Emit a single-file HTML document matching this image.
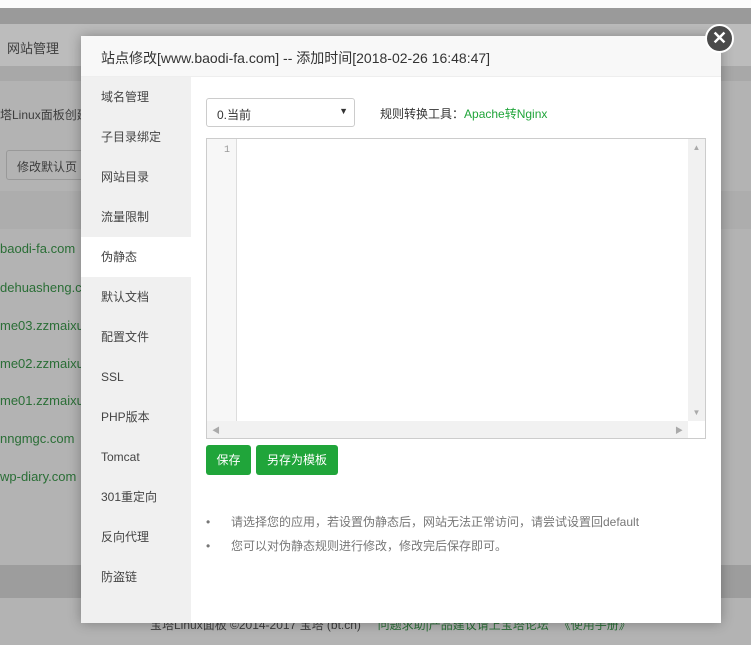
<!DOCTYPE html>
<html><head><meta charset="utf-8"><style>
*{margin:0;padding:0;box-sizing:border-box}
body{width:751px;height:645px;overflow:hidden;position:relative;background:#b3b3b3;font-family:"Liberation Sans","Noto Sans CJK SC",sans-serif;font-size:12px;color:#333}
.a{position:absolute}
.bgtext{color:#3d3d3d;font-size:13px}
.g{color:#2a6e36;font-size:13px}
.dlg{left:81px;top:36px;width:640px;height:587px;background:#fff;box-shadow:0 0 12px rgba(0,0,0,.3)}
.title{left:0;top:0;width:640px;height:41px;background:#f8f8f8;border-bottom:1px solid #eee;font-size:14px;color:#333;padding:12px 0 0 20px}
.side{left:0;top:41px;width:110px;height:546px;background:#f0f0f0}
.side div{height:40px;line-height:40px;padding-left:20px;font-size:12px;color:#444}
.side .on{background:#fff}
</style></head><body>
<div class="a" style="left:0;top:0;width:751px;height:8px;background:#fbfbfb"></div>
<div class="a" style="left:0;top:8px;width:751px;height:16px;background:#9a9a9a"></div>
<div class="a" style="left:0;top:24px;width:751px;height:42px;background:#bcbcbc"></div>
<div class="a bgtext" style="left:7px;top:38px">网站管理</div>
<div class="a" style="left:0;top:66px;width:751px;height:15px;background:#a8a8a8"></div>
<div class="a bgtext" style="left:0;top:106px;font-size:12px">塔Linux面板创建</div>
<div class="a" style="left:6px;top:150px;width:80px;height:30px;border:1px solid #999;border-radius:3px"></div>
<div class="a bgtext" style="left:17px;top:158px;font-size:12px">修改默认页</div>
<div class="a" style="left:0;top:191px;width:751px;height:38px;background:#adadad"></div>
<div class="a g" style="left:0;top:241px">baodi-fa.com</div>
<div class="a g" style="left:0;top:280px">dehuasheng.com</div>
<div class="a g" style="left:0;top:318px">me03.zzmaixu</div>
<div class="a g" style="left:0;top:356px">me02.zzmaixu</div>
<div class="a g" style="left:0;top:393px">me01.zzmaixu</div>
<div class="a g" style="left:0;top:431px">nngmgc.com</div>
<div class="a g" style="left:0;top:469px">wp-diary.com</div>
<div class="a" style="left:0;top:565px;width:751px;height:33px;background:#9d9d9d"></div>
<div class="a bgtext" style="left:150px;top:616px;font-size:12px">宝塔Linux面板 ©2014-2017 宝塔 (bt.cn) &nbsp;&nbsp;&nbsp; <span class="g" style="font-size:12px">问题求助|产品建议请上宝塔论坛 &nbsp;&nbsp;《使用手册》</span></div>

<div class="a dlg">
<div class="a title">站点修改[www.baodi-fa.com] -- 添加时间[2018-02-26 16:48:47]</div>
<div class="a side">
<div>域名管理</div><div>子目录绑定</div><div>网站目录</div><div>流量限制</div><div class="on">伪静态</div><div>默认文档</div><div>配置文件</div><div>SSL</div><div>PHP版本</div><div>Tomcat</div><div>301重定向</div><div>反向代理</div><div>防盗链</div>
</div>
<div class="a" style="left:125px;top:62px;width:149px;height:29px;border:1px solid #ccc;border-radius:3px;padding:7px 0 0 10px">0.当前<span style="position:absolute;right:6px;top:7px;font-size:9px">▼</span></div>
<div class="a" style="left:299px;top:69px">规则转换工具：<span style="color:#20a53a">Apache转Nginx</span></div>
<div class="a" style="left:125px;top:102px;width:500px;height:301px;border:1px solid #ccc">
<div class="a" style="left:0;top:0;width:30px;height:299px;background:#f7f7f7;border-right:1px solid #ddd;color:#999;font-size:10px;text-align:right;padding:6px 6px 0 0;font-family:'Liberation Mono',monospace">1</div>
<div class="a" style="left:481px;top:0;width:17px;height:282px;background:#f1f1f1;color:#aaa;font-size:8px;text-align:center;padding-top:4px">▲<div style="position:absolute;bottom:4px;width:17px">▼</div></div>
<div class="a" style="left:0;top:282px;width:481px;height:17px;background:#f1f1f1;color:#aaa;font-size:8px;padding:4px 0 0 5px">◀<span style="position:absolute;right:5px">▶</span></div>
</div>
<div class="a" style="left:125px;top:409px;width:45px;height:30px;background:#20a53a;border-radius:3px;color:#fff;font-size:12px;line-height:30px;text-align:center">保存</div>
<div class="a" style="left:175px;top:409px;width:82px;height:30px;background:#20a53a;border-radius:3px;color:#fff;font-size:12px;line-height:30px;text-align:center">另存为模板</div>
<div class="a" style="left:125px;top:474px;color:#777;line-height:24px">
<div><span style="display:inline-block;width:25px">•</span>请选择您的应用，若设置伪静态后，网站无法正常访问，请尝试设置回default</div>
<div><span style="display:inline-block;width:25px">•</span>您可以对伪静态规则进行修改，修改完后保存即可。</div>
</div>
</div>
<div class="a" style="left:705px;top:24px;width:29px;height:29px;border-radius:50%;background:#4a4a4a;border:2px solid #fff;color:#fff;font-size:18px;line-height:25px;text-align:center;font-weight:bold">✕</div>
</body></html>
